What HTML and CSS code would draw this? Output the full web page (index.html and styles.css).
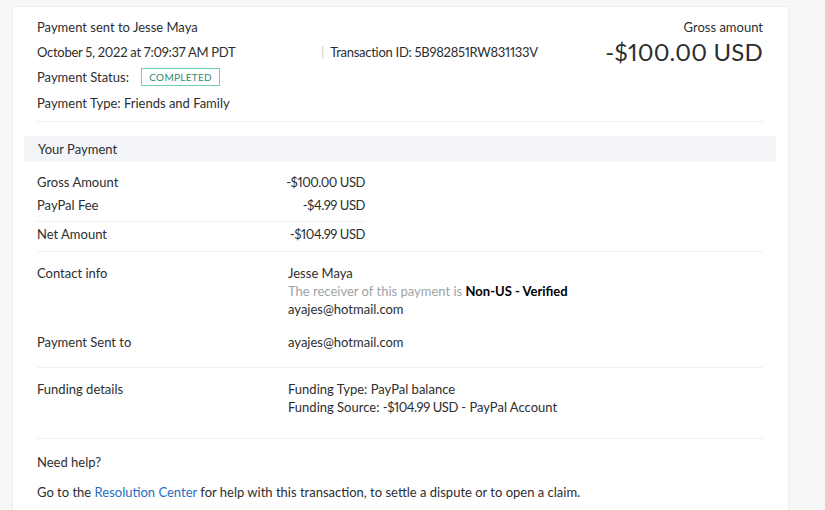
FILE: index.html
```html
<!DOCTYPE html>
<html>
<head>
<meta charset="utf-8">
<link rel="stylesheet" href="styles.css">
</head>
<body>
<div class="page">
  <div class="card">
    <div class="header">
      <div class="h-title">Payment sent to Jesse Maya</div>
      <div class="h-gross-label">Gross amount</div>
      <div class="h-date num">October 5, 2022 at 7:09:37 AM PDT</div>
      <div class="h-txn"><span class="sep">|</span><span class="num">Transaction ID: 5B982851RW831133V</span></div>
      <div class="h-amount">-$100.00 USD</div>
      <div class="h-status">Payment Status: <span class="badge">COMPLETED</span></div>
      <div class="h-type">Payment Type: Friends and Family</div>
    </div>

    <div class="band">Your Payment</div>

    <div class="amounts">
      <div class="amt-group">
        <div class="amt-row"><span>Gross Amount</span><span class="money">-$100.00 USD</span></div>
        <div class="amt-row"><span>PayPal Fee</span><span class="money">-$4.99 USD</span></div>
      </div>
      <div class="amt-row net"><span>Net Amount</span><span class="money">-$104.99 USD</span></div>
    </div>

    <div class="section contact">
      <div class="info-row">
        <div class="label">Contact info</div>
        <div class="value">
          <div>Jesse Maya</div>
          <div class="muted">The receiver of this payment is <b>Non-US - Verified</b></div>
          <div>ayajes@hotmail.com</div>
        </div>
      </div>
      <div class="info-row sent">
        <div class="label">Payment Sent to</div>
        <div class="value">ayajes@hotmail.com</div>
      </div>
    </div>

    <div class="section funding">
      <div class="info-row">
        <div class="label">Funding details</div>
        <div class="value">
          <div>Funding Type: PayPal balance</div>
          <div>Funding Source: <span class="money">-$104.99 USD</span> - PayPal Account</div>
        </div>
      </div>
    </div>

    <div class="help">
      <div class="help-title">Need help?</div>
      <div class="help-text">Go to the <a href="#">Resolution Center</a> for help with this transaction, to settle a dispute or to open a claim.</div>
    </div>
  </div>
</div>
</body>
</html>
```

FILE: styles.css
```css
html, body {
  margin: 0;
  padding: 0;
  height: 100%;
  overflow: hidden;
}
body {
  background: #f7f7f7;
  font-family: Lato, "Open Sans", Arial, sans-serif;
  font-size: 13px;
  color: #2c2e2f;
  font-variant-numeric: proportional-nums;
}
.num {
  letter-spacing: -0.28px;
}
.money {
  letter-spacing: -0.45px;
}
.page {
  padding: 6px 0 0 12px;
}
.card {
  width: 775px;
  min-height: 600px;
  background: #fff;
  border: 1px solid #ececec;
}
.header {
  margin: 0 25px 0 24px;
  padding-top: 7px;
  padding-bottom: 5px;
  display: grid;
  grid-template-columns: 284px 1fr auto;
  grid-template-rows: 25px 25px 26px 26px;
  align-items: center;
  border-bottom: 1px solid #eef0f1;
}
.h-title { grid-column: 1; grid-row: 1; }
.h-gross-label { grid-column: 3; grid-row: 1; text-align: right; }
.h-date { grid-column: 1; grid-row: 2; }
.h-txn { grid-column: 2; grid-row: 2; }
.sep { color: #c9cbcd; margin-right: 6px; }
.h-amount {
  grid-column: 3;
  grid-row: 2;
  text-align: right;
  font-size: 24px;
  line-height: 28px;
  letter-spacing: 0.2px;
}
.h-status { grid-column: 1 / 4; grid-row: 3; }
.h-type { grid-column: 1 / 4; grid-row: 4; }
.badge {
  display: inline-block;
  margin-left: 9px;
  padding: 0 7px;
  height: 16px;
  line-height: 16px;
  border: 1px solid #6fcfb7;
  color: #2b8c78;
  font-size: 10px;
  letter-spacing: 0.3px;
  vertical-align: 1px;
}
.band {
  margin: 14px 12px 0 11px;
  height: 26px;
  line-height: 26px;
  padding-left: 14px;
  background: #f3f5f8;
}
.amounts {
  margin: 0 25px 0 24px;
  padding-top: 9px;
  padding-bottom: 5px;
  border-bottom: 1px solid #eef0f1;
}
.amt-group {
  width: 328px;
  padding-bottom: 4px;
  border-bottom: 1px solid #eef0f1;
}
.amt-row {
  width: 328px;
  display: flex;
  justify-content: space-between;
  line-height: 23px;
}
.amt-row.net {
  margin-top: 1px;
}
.section {
  margin: 0 25px 0 24px;
  border-bottom: 1px solid #eef0f1;
}
.contact {
  padding-top: 12px;
  padding-bottom: 16px;
}
.funding {
  padding-top: 12px;
  padding-bottom: 22px;
}
.info-row {
  display: grid;
  grid-template-columns: 251px 1fr;
  line-height: 18px;
}
.info-row.sent {
  margin-top: 15px;
}
.muted {
  color: #9da3a6;
}
.muted b {
  color: #000;
  font-weight: 700;
}
.help {
  margin: 0 25px 0 24px;
  padding-top: 14px;
}
.help-title {
  line-height: 18px;
}
.help-text {
  margin-top: 12px;
  line-height: 18px;
}
.help-text a {
  color: #1f6ebf;
  text-decoration: none;
}
```
